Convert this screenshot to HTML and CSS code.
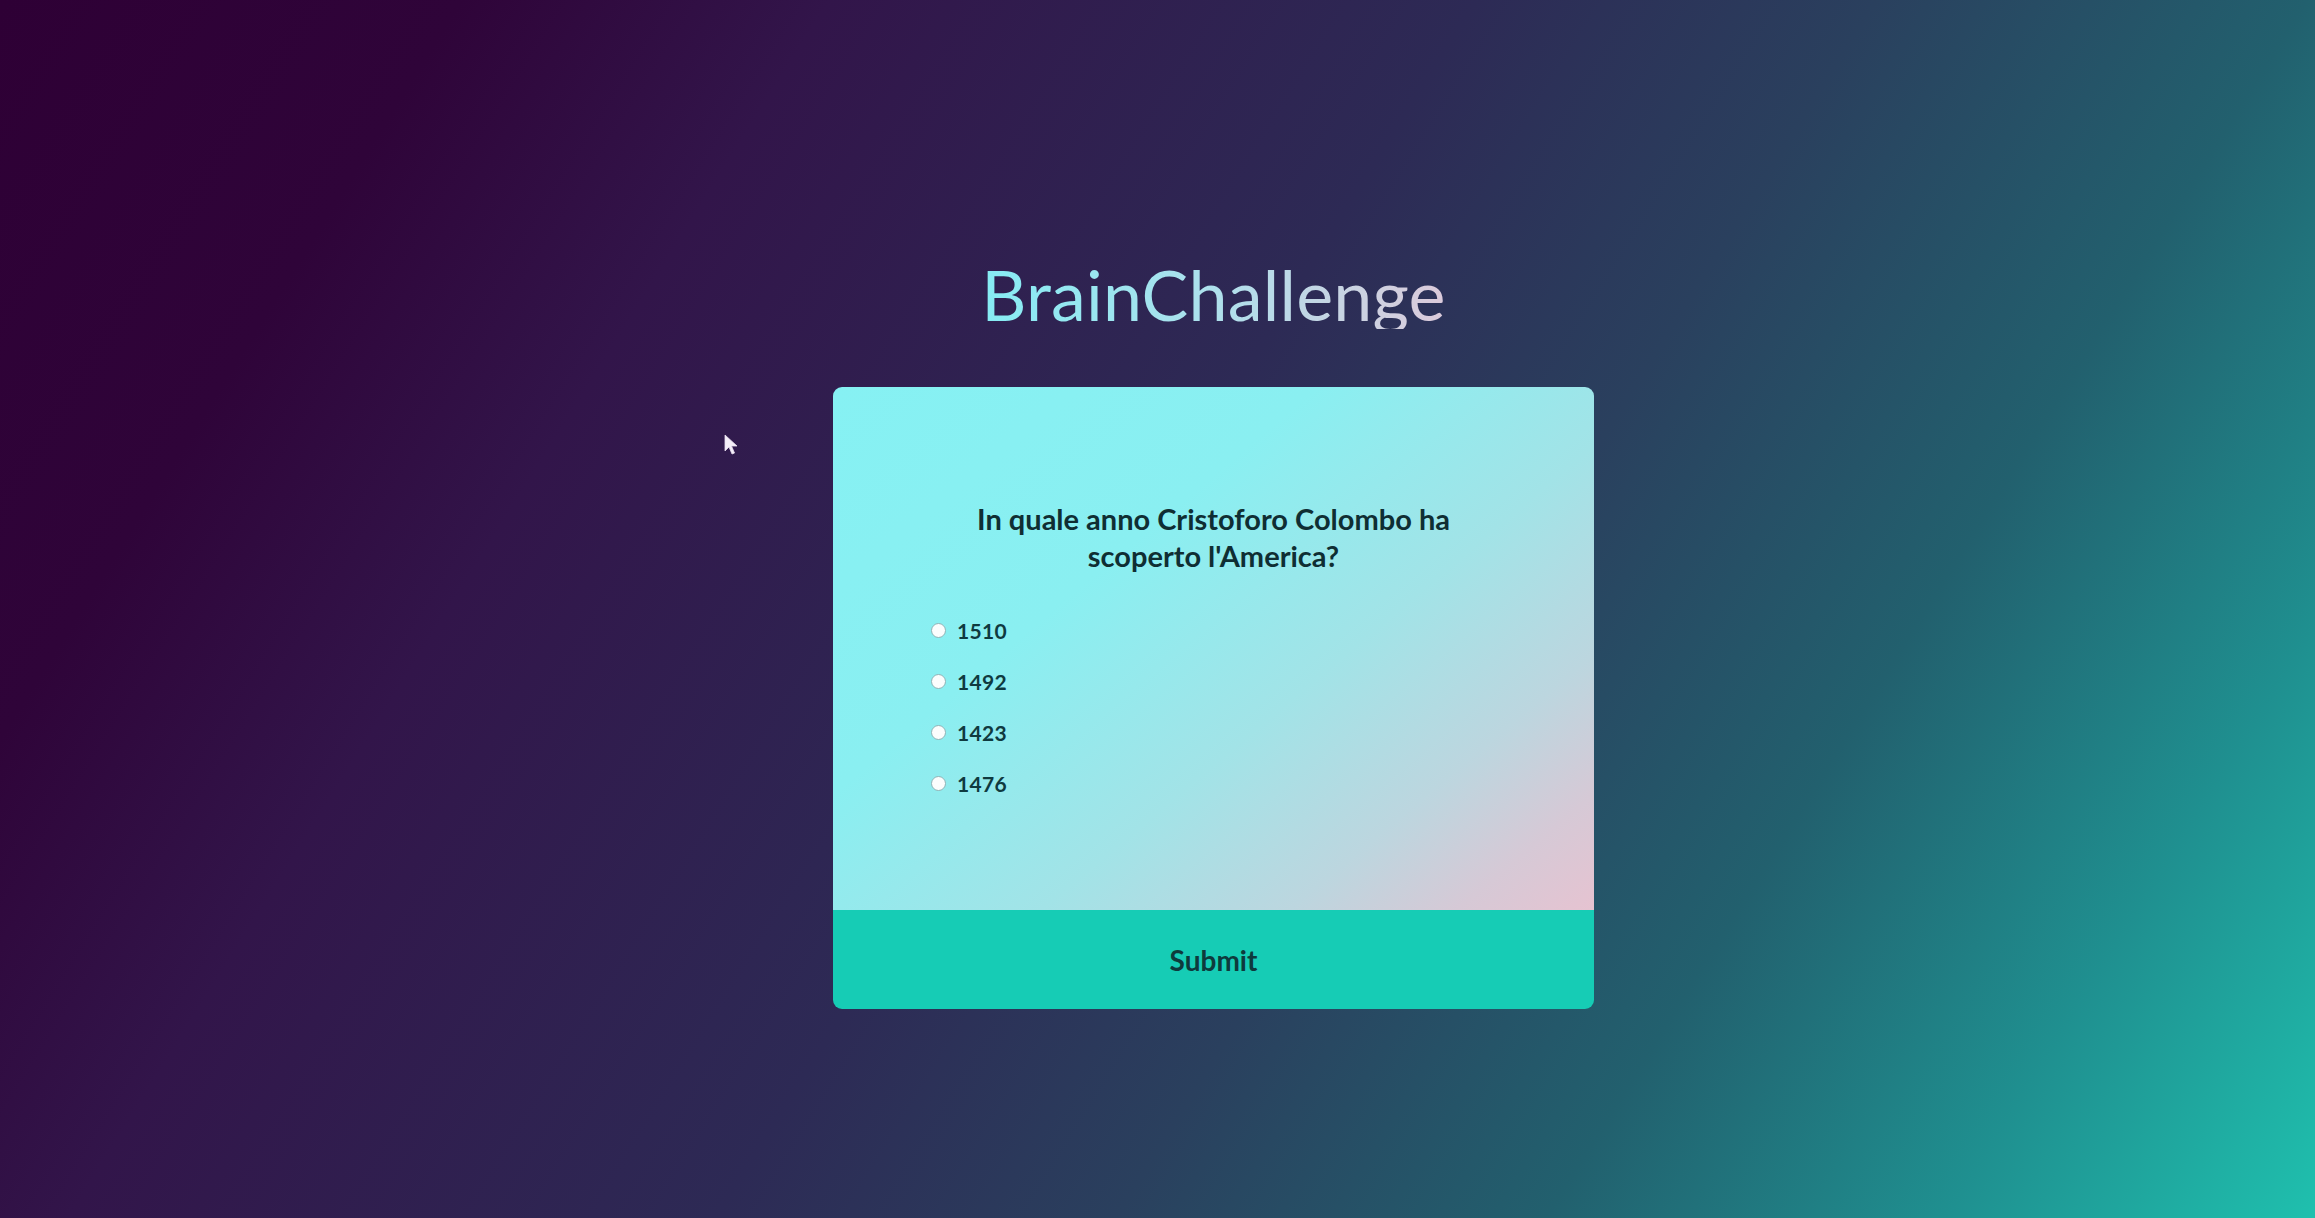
FILE: index.html
```html
<!DOCTYPE html>
<html lang="it">
<head>
<meta charset="utf-8">
<title>BrainChallenge</title>
<link rel="stylesheet" href="styles.css">
</head>
<body>
<div class="page">
  <h1 class="brand">BrainChallenge</h1>
  <main class="quiz">
    <div class="quiz-body">
      <h2 class="question">In quale anno Cristoforo Colombo ha scoperto l'America?</h2>
      <ul class="answers">
        <li class="answer"><input class="radio" type="radio" name="q" id="a"><label for="a">1510</label></li>
        <li class="answer"><input class="radio" type="radio" name="q" id="b"><label for="b">1492</label></li>
        <li class="answer"><input class="radio" type="radio" name="q" id="c"><label for="c">1423</label></li>
        <li class="answer"><input class="radio" type="radio" name="q" id="d"><label for="d">1476</label></li>
      </ul>
    </div>
    <button class="submit" type="button">Submit</button>
  </main>
</div>
<svg class="cursor" width="14" height="22" viewBox="0 0 14 22"><path d="M1 1 L1 17 L5 13 L8 20 L10.5 19 L7.5 12 L13 12 Z" fill="#f4eef8" stroke="#e8def0" stroke-width="0.8" stroke-linejoin="round"/></svg>
</body>
</html>
```

FILE: styles.css
```css
html, body {
  margin: 0;
  padding: 0;
}

body {
  width: 2315px;
  height: 1218px;
  overflow: hidden;
  position: relative;
  font-family: "Lato", "Open Sans", sans-serif;
  background: linear-gradient(122deg, #2e0035 0%, #2f0439 15%, #32154a 27%, #2d2a55 48%, #2a405e 61%, #22606e 75%, #1f9090 88%, #1fc0ae 100%);
}

.page {
  display: flex;
  flex-direction: column;
  align-items: center;
  padding-left: 112px;
  padding-top: 257px;
}

.brand {
  margin: 0;
  font-size: 70px;
  line-height: 1;
  font-weight: 400;
  letter-spacing: 0.2px;
  background: linear-gradient(90deg, #86ecf4 0%, #aee0ec 50%, #dccadb 100%);
  -webkit-background-clip: text;
  background-clip: text;
  color: transparent;
  padding-top: 2px;
  margin-bottom: 58px;
}

.quiz {
  width: 761px;
  border-radius: 9px;
  overflow: hidden;
  display: flex;
  flex-direction: column;
}

.quiz-body {
  height: 523px;
  box-sizing: border-box;
  padding: 113px 98px 0;
  background: linear-gradient(140deg, #86f1f3 0%, #8aeff1 35%, #a2e3e7 60%, #bcd6df 78%, #d6c9d6 90%, #e6c3d1 100%);
}

.question {
  margin: 0 auto;
  max-width: 520px;
  text-align: center;
  font-size: 29px;
  line-height: 37px;
  font-weight: 700;
  color: #0f2e33;
}

.answers {
  list-style: none;
  margin: 31px 0 0;
  padding: 0;
}

.answer {
  height: 51px;
  display: flex;
  align-items: center;
  gap: 11px;
}

.radio {
  appearance: none;
  -webkit-appearance: none;
  margin: 0;
  width: 15px;
  height: 15px;
  border-radius: 50%;
  background: #fbfdfd;
  border: 1px solid #8fb3b6;
  box-sizing: border-box;
}

.answer label {
  font-size: 21px;
  font-weight: 700;
  color: #0f3a3f;
  letter-spacing: 0.3px;
}

.submit {
  height: 99px;
  border: 0;
  margin: 0;
  background: #16ccb5;
  font-family: "Lato", "Open Sans", sans-serif;
  font-size: 28px;
  font-weight: 700;
  color: #0e3a3c;
  cursor: pointer;
}

.cursor {
  position: absolute;
  left: 724px;
  top: 434px;
}
```
